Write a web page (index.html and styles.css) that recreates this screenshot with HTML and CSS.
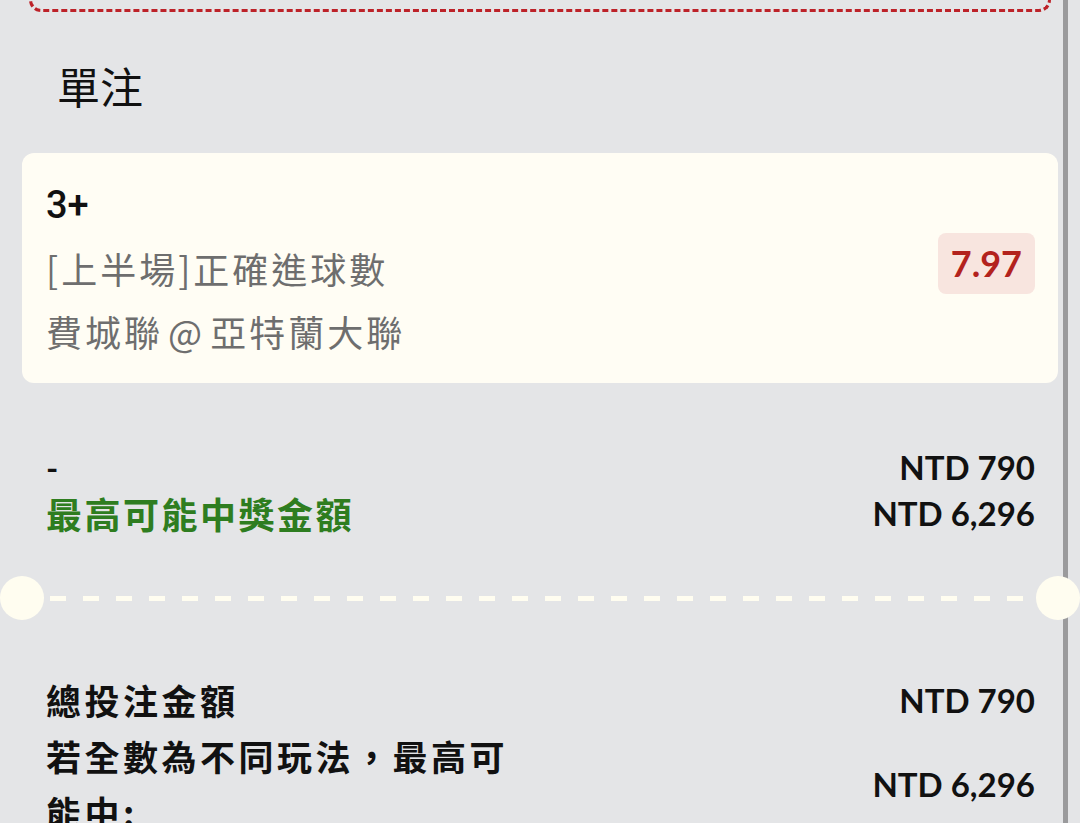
FILE: index.html
```html
<!DOCTYPE html>
<html lang="zh-Hant">
<head>
    <meta charset="UTF-8">
    <meta name="viewport" content="width=device-width, initial-scale=1.0">
    <title>單注</title>
    <link rel="stylesheet" href="styles.css">
</head>
<body>
    <div class="page">
        <!-- Bottom edge of the previous ticket -->
        <div class="ticket-edge"></div>

        <h2 class="section-title">單注</h2>

        <div class="bet-card">
            <div class="bet-info">
                <div class="bet-pick">3+</div>
                <div class="bet-line">[上半場]正確進球數</div>
                <div class="bet-line teams">費城聯 @ 亞特蘭大聯</div>
            </div>
            <div class="odds">7.97</div>
        </div>

        <div class="amount-row">
            <div class="amount-labels">
                <div class="dash">-</div>
                <div class="win-label">最高可能中獎金額</div>
            </div>
            <div class="amount-values">
                <div>NTD 790</div>
                <div>NTD 6,296</div>
            </div>
        </div>

        <!-- Perforation -->
        <div class="perforation">
            <span class="notch"></span>
            <span class="perf-line"></span>
            <span class="notch"></span>
        </div>

        <div class="summary">
            <div class="summary-row">
                <div class="summary-label">總投注金額</div>
                <div class="summary-value">NTD 790</div>
            </div>
            <div class="summary-row">
                <div class="summary-label">若全數為不同玩法，最高可能中:</div>
                <div class="summary-value">NTD 6,296</div>
            </div>
        </div>

        <div class="scrollbar"></div>
    </div>
</body>
</html>
```

FILE: styles.css
```css
body {
    margin: 0;
    padding: 0;
    font-family: Lato, "Noto Sans CJK TC", sans-serif;
    background-color: #e4e5e7;
    color: #111;
    overflow: hidden;
}

.page {
    position: relative;
    width: 1080px;
    min-height: 100vh;
}

.ticket-edge {
    height: 20px;
    margin: -11px 29px 0;
    border: 3px dashed #bd2229;
    border-top: none;
    border-radius: 0 0 12px 12px;
}

.section-title {
    margin: 48px 0 0;
    padding-left: 57px;
    font-size: 43px;
    font-weight: 400;
    line-height: 56px;
    color: #111;
}

/* Bet card */
.bet-card {
    display: flex;
    align-items: center;
    justify-content: space-between;
    margin: 37px 22px 0;
    padding: 21px 23px 20px 24px;
    background-color: #fffdf4;
    border-radius: 12px;
}

.bet-pick {
    font-family: Roboto, "Noto Sans CJK TC", sans-serif;
    font-size: 38px;
    font-weight: 500;
    line-height: 63px;
    color: #111;
}

.bet-line {
    font-family: "Noto Sans CJK TC", sans-serif;
    font-size: 36px;
    line-height: 63px;
    letter-spacing: 3px;
    color: #6e6e6e;
}

.teams {
    word-spacing: -6px;
}

.odds {
    margin-top: -10px;
    padding: 0 13px;
    height: 61px;
    line-height: 61px;
    font-size: 36px;
    font-weight: 700;
    color: #b3221d;
    background-color: #f8e5df;
    border-radius: 8px;
}

/* Amount rows */
.amount-row {
    display: flex;
    justify-content: space-between;
    margin-top: 61px;
    padding: 0 45px 0 46px;
    line-height: 46px;
    font-size: 33px;
    font-weight: 700;
}

.win-label {
    font-family: "Noto Sans CJK TC", sans-serif;
    font-size: 36px;
    letter-spacing: 2.5px;
    color: #2e7d20;
}

.amount-values {
    text-align: right;
}

/* Perforation */
.perforation {
    display: flex;
    align-items: center;
    margin-top: 40px;
}

.notch {
    position: relative;
    z-index: 1;
    width: 44px;
    height: 44px;
    border-radius: 50%;
    background-color: #fffdf0;
}

.perf-line {
    flex: 1;
    height: 5px;
    margin: 0 6px;
    background: repeating-linear-gradient(to right, #fffdf0 0 16px, transparent 16px 33px);
}

/* Summary */
.summary {
    margin-top: 52px;
    padding: 0 45px 0 46px;
}

.summary-row {
    display: flex;
    align-items: center;
    justify-content: space-between;
}

.summary-label {
    max-width: 480px;
    font-family: "Noto Sans CJK TC", sans-serif;
    font-size: 35px;
    font-weight: 700;
    line-height: 56px;
    letter-spacing: 3.5px;
}

.summary-value {
    font-size: 33px;
    font-weight: 700;
}

.scrollbar {
    position: absolute;
    top: 0;
    bottom: 0;
    left: 1063px;
    width: 5px;
    background-color: #9a9a9c;
}
```
